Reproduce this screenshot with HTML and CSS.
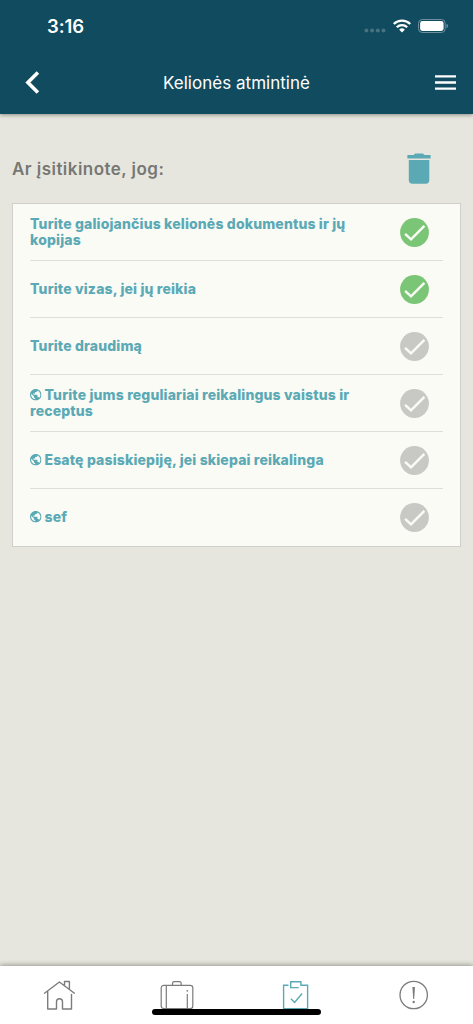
FILE: index.html
```html
<!DOCTYPE html>
<html lang="lt">
<head>
<meta charset="utf-8">
<title>Kelionės atmintinė</title>
<link rel="stylesheet" href="styles.css">
</head>
<body>
<svg class="defs" aria-hidden="true">
  <symbol id="check" viewBox="0 0 29 29"><circle cx="14.5" cy="14.5" r="14.4" fill="currentColor"/><path d="M5.1 15.8l5.9 5.5L24.4 7.900" fill="none" stroke="#fafbf5" stroke-width="2.5"/></symbol>
  <symbol id="globe" viewBox="2 2 20 20"><path d="M12 2C6.48 2 2 6.48 2 12s4.480 10 10 10 10-4.480 10-10S17.520 2 12 2zm-1 17.930c-3.950-.490-7-3.850-7-7.930 0-.620.080-1.210.210-1.790L9 15v1c0 1.100.900 2 2 2v1.930zm6.900-2.540c-.260-.810-1-1.390-1.900-1.390h-1v-3c0-.550-.450-1-1-1H8v-2h2c.550 0 1-.450 1-1V7h2c1.100 0 2-.900 2-2v-.410c2.930 1.190 5 4.060 5 7.410 0 2.080-.800 3.970-2.100 5.390z" fill="currentColor"/></symbol>
</svg>
<div class="app">
  <header class="header">
    <div class="status">
      <span class="time">3:16</span>
      <span class="indicators">
        <svg class="dots" viewBox="0 0 22 5"><g fill="#48717f"><circle cx="2.4" cy="2.5" r="2"/><circle cx="8.1" cy="2.5" r="2"/><circle cx="13.8" cy="2.5" r="2"/><circle cx="19.5" cy="2.5" r="2"/></g></svg>
        <svg class="wifi" viewBox="0 0 18 14"><g fill="none" stroke="#fff" stroke-width="2.3"><path d="M.8 5a11.700 11.700 0 0 1 16.400 0"/><path d="M3.800 8.300a7.400 7.400 0 0 1 10.400 0"/></g><path d="M9 13.500l-2.800-2.800a4 4 0 0 1 5.600 0z" fill="#fff"/></svg>
        <svg class="battery" viewBox="0 0 31 14"><rect x=".5" y=".5" width="26.7" height="13" rx="3.8" fill="none" stroke="#6f919f"/><rect x="2.1" y="2.1" width="23.5" height="9.8" rx="2.3" fill="#fff"/><path d="M28.500 4.800c2 .7 2 3.700 0 4.400z" fill="#6f919f"/></svg>
      </span>
    </div>
    <div class="toolbar">
      <svg class="back" viewBox="0 0 14 23"><path d="M12.400 1.400L2.400 11.500l10 10.100" fill="none" stroke="#fff" stroke-width="3.6"/></svg>
      <h1 class="title">Kelionės atmintinė</h1>
      <svg class="menu" viewBox="0 0 21 15"><path d="M0 1.300h21M0 7.500h21M0 13.600h21" stroke="#fff" stroke-width="2.3"/></svg>
    </div>
  </header>
  <main class="content">
    <div class="heading">
      <h2 class="question">Ar įsitikinote, jog:</h2>
      <svg class="trash" viewBox="0 0 24 31"><path d="M.4 1.900h6.200L8.100.4h7.800l1.500 1.500h6.200v3.600H.4zM1.800 6.900h20.500v20.200q0 3.600-3.600 3.600H5.400q-3.600 0-3.600-3.600z" fill="#5ba9b5"/></svg>
    </div>
    <ul class="list">
      <li class="item"><span class="label">Turite galiojančius kelionės dokumentus ir jų kopijas</span><svg class="check done"><use href="#check"/></svg></li>
      <li class="item"><span class="label">Turite vizas, jei jų reikia</span><svg class="check done"><use href="#check"/></svg></li>
      <li class="item"><span class="label">Turite draudimą</span><svg class="check"><use href="#check"/></svg></li>
      <li class="item"><span class="label"><svg class="globe"><use href="#globe"/></svg>Turite jums reguliariai reikalingus vaistus ir receptus</span><svg class="check"><use href="#check"/></svg></li>
      <li class="item"><span class="label"><svg class="globe"><use href="#globe"/></svg>Esatę pasiskiepiję, jei skiepai reikalinga</span><svg class="check"><use href="#check"/></svg></li>
      <li class="item"><span class="label"><svg class="globe"><use href="#globe"/></svg>sef</span><svg class="check"><use href="#check"/></svg></li>
    </ul>
  </main>
  <nav class="tabs">
    <span class="tab"><svg class="tab-icon" viewBox="0 0 36 32"><g fill="none" stroke="currentColor" stroke-width="1.4" stroke-linecap="round" stroke-linejoin="round"><path d="M3.500 14.200L18.400 3l15 11.200M6.700 12v18h8.800v-7.300a3 3 0 0 1 6 0V30h9V15.500M23.500 6.200V2.500h4.900v7.500"/></g></svg></span>
    <span class="tab"><svg class="tab-icon" viewBox="0 0 36 32"><g fill="none" stroke="currentColor" stroke-width="1.2"><rect x="2.2" y="6.3" width="31.6" height="23.3" rx="2.6"/><path d="M13.500 6.200V4.400q0-1.700 1.700-1.700h5.300q1.700 0 1.700 1.700v1.800M7.300 6.300v23.300M28.300 15v14.500"/></g><circle cx="28.3" cy="11.8" r=".9" fill="currentColor"/></svg></span>
    <span class="tab active"><svg class="tab-icon" viewBox="0 0 36 32"><path d="M10.500 6.200H5.600v23.600h24V6.200h-6.700V2.800H12.700v5.800h8M12.900 19.800l3.700 3.700 7.500-9" fill="none" stroke="currentColor" stroke-width="1.4"/></svg></span>
    <span class="tab"><svg class="tab-icon" viewBox="0 0 36 32"><circle cx="17.700" cy="16" r="13.7" fill="none" stroke="currentColor" stroke-width="1.3"/><path d="M16.400 8h2.600l-.8 12h-1z" fill="currentColor"/><circle cx="17.700" cy="23" r="1.2" fill="currentColor"/></svg></span>
    <span class="home-indicator"></span>
  </nav>
</div>
</body>
</html>
```

FILE: styles.css
```css
* { box-sizing: border-box; }
body { margin: 0; font-family: Inter, "Liberation Sans", sans-serif; }
svg { display: block; flex: none; }
.defs { position: absolute; width: 0; height: 0; }
.app { height: 1024px; display: flex; flex-direction: column; overflow: hidden; background: #e6e6de; }
.header { height: 114px; flex: none; color: #fff; background: #104b60; box-shadow: 0 1px 4px rgba(0, 0, 0, .4); }
.status { height: 51px; padding: 0 24.5px 0 47px; display: flex; justify-content: space-between; align-items: center; }
.time { padding-top: 1px; font-size: 18.5px; font-weight: 600; letter-spacing: -.1px; }
.indicators { display: flex; align-items: center; gap: 5.5px; }
.dots { width: 22px; height: 5px; margin-top: 9px; }
.wifi { width: 20px; height: 14px; margin-right: .5px; }
.battery { width: 31px; height: 14px; }
.toolbar { height: 63px; padding: 0 17px 0 25px; display: flex; justify-content: space-between; align-items: center; }
.back { width: 15px; height: 23px; }
.title { margin: 0 2px 0 0; font-size: 17px; font-weight: 400; letter-spacing: .02px; }
.menu { width: 21px; height: 15px; }
.content { flex: 1; padding: 0 12px; }
.heading { height: 89px; padding: 20px 30.5px 0 0; display: flex; justify-content: space-between; align-items: center; }
.question { margin: 0; font-size: 17px; font-weight: 600; letter-spacing: .46px; color: #777773; }
.trash { width: 24px; height: 31px; }
.list { margin: 0; padding: 0 17px; list-style: none; background: #fafbf5; border: 1px solid #cfd0cb; }
.item { height: 57px; padding-right: 14px; display: flex; justify-content: space-between; align-items: center; border-bottom: 1px solid #dedfda; }
.item:last-child { border-bottom-color: transparent; }
.label { width: 345px; font-size: 14px; line-height: 16px; font-weight: 800; letter-spacing: .15px; color: #5ba9b5; }
.globe { display: inline-block; width: 11.5px; height: 11.5px; margin-right: 3px; vertical-align: -.5px; }
.check { width: 29px; height: 29px; color: #c8c9c4; }
.check.done { color: #7bc576; }
.tabs { position: relative; height: 58px; flex: none; display: grid; grid-template-columns: repeat(4, 1fr); align-items: center; justify-items: center; background: #fff; color: #7c7c7c; box-shadow: 0 -1px 5px rgba(0, 0, 0, .35); }
.tab-icon { width: 36px; height: 32px; }
.active { color: #5ba9b5; }
.home-indicator { position: absolute; left: 152px; bottom: 9px; width: 169px; height: 6px; border-radius: 3px; background: #000; }
```
